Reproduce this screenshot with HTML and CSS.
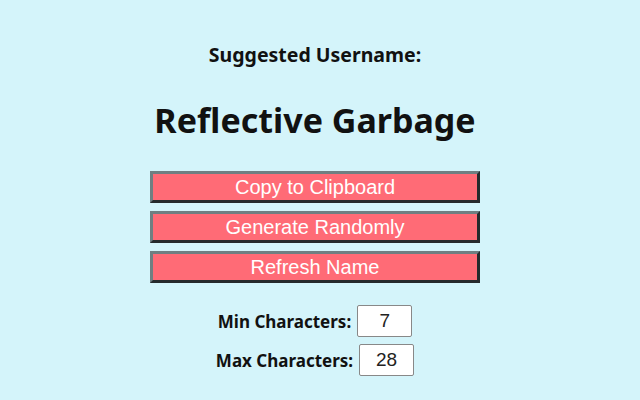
FILE: index.html
```html
<!DOCTYPE html>
<html lang="en">
<head>
  <meta charset="UTF-8">
  <title>Username Generator</title>
  <link rel="stylesheet" href="styles.css">
</head>
<body>
  <div class="container">
    <h2 class="label">Suggested Username:</h2>
    <h1 id="username" class="username">Reflective Garbage</h1>

    <div class="buttons">
      <button class="btn">Copy to Clipboard</button>
      <button class="btn">Generate Randomly</button>
      <button class="btn">Refresh Name</button>
    </div>

    <div class="settings">
      <div class="row">
        <label for="minChars">Min Characters:</label>
        <input type="text" id="minChars" value="7">
      </div>
      <div class="row">
        <label for="maxChars">Max Characters:</label>
        <input type="text" id="maxChars" value="28">
      </div>
    </div>
  </div>
</body>
</html>
```

FILE: styles.css
```css
body {
  margin: 0;
  background-color: #d4f4fa;
  font-family: "Noto Sans", sans-serif;
  color: #111;
}
.container {
  display: flex;
  flex-direction: column;
  align-items: center;
  padding: 40px 10px 0 0;
}
.label {
  margin: 0;
  font-size: 19.5px;
  font-weight: bold;
  line-height: 30px;
}
.username {
  margin: 26px 0 0 0;
  font-size: 34px;
  font-weight: bold;
  line-height: 48px;
}
.buttons {
  display: flex;
  flex-direction: column;
  gap: 8px;
  margin-top: 27px;
}
.btn {
  width: 330px;
  height: 32px;
  padding: 0;
  background-color: #ff6b76;
  color: #fff;
  font-family: "Liberation Sans", Arial, sans-serif;
  font-size: 20px;
  border: 3px solid;
  border-color: #6f7f82 #252a2c #252a2c #6f7f82;
  cursor: pointer;
}
.settings {
  display: flex;
  flex-direction: column;
  gap: 7px;
  margin-top: 22px;
}
.row {
  display: flex;
  justify-content: center;
  align-items: center;
  gap: 6px;
}
.row label {
  font-size: 17px;
  font-weight: bold;
}
.row input {
  width: 55px;
  height: 32px;
  box-sizing: border-box;
  border: 1px solid #888;
  border-radius: 2px;
  text-align: center;
  font-family: "Liberation Sans", Arial, sans-serif;
  font-size: 19px;
  color: #222;
  padding: 0;
}
```
